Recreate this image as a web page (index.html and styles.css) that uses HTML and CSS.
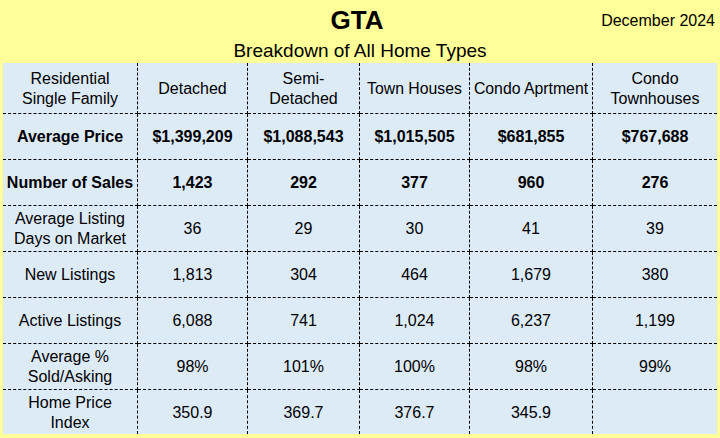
FILE: index.html
```html
<!DOCTYPE html>
<html lang="en">
<head>
<meta charset="utf-8">
<title>GTA - Breakdown of All Home Types</title>
<link rel="stylesheet" href="styles.css">
</head>
<body>
<div class="page">
  <header class="head">
    <div class="title-row">
      <div></div>
      <h1 class="title">GTA</h1>
      <div class="date">December 2024</div>
    </div>
    <h2 class="subtitle">Breakdown of All Home Types</h2>
  </header>
  <div class="grid">
    <div class="cell">Residential<br>Single Family</div>
    <div class="cell">Detached</div>
    <div class="cell">Semi-<br>Detached</div>
    <div class="cell narrow">Town Houses</div>
    <div class="cell narrow">Condo Aprtment</div>
    <div class="cell last">Condo<br>Townhouses</div>

    <div class="cell bold">Average Price</div>
    <div class="cell bold">$1,399,209</div>
    <div class="cell bold">$1,088,543</div>
    <div class="cell bold">$1,015,505</div>
    <div class="cell bold">$681,855</div>
    <div class="cell bold last">$767,688</div>

    <div class="cell bold">Number of Sales</div>
    <div class="cell bold">1,423</div>
    <div class="cell bold">292</div>
    <div class="cell bold">377</div>
    <div class="cell bold">960</div>
    <div class="cell bold last">276</div>

    <div class="cell">Average Listing<br>Days on Market</div>
    <div class="cell">36</div>
    <div class="cell">29</div>
    <div class="cell">30</div>
    <div class="cell">41</div>
    <div class="cell last">39</div>

    <div class="cell">New Listings</div>
    <div class="cell">1,813</div>
    <div class="cell">304</div>
    <div class="cell">464</div>
    <div class="cell">1,679</div>
    <div class="cell last">380</div>

    <div class="cell">Active Listings</div>
    <div class="cell">6,088</div>
    <div class="cell">741</div>
    <div class="cell">1,024</div>
    <div class="cell">6,237</div>
    <div class="cell last">1,199</div>

    <div class="cell">Average %<br>Sold/Asking</div>
    <div class="cell">98%</div>
    <div class="cell">101%</div>
    <div class="cell">100%</div>
    <div class="cell">98%</div>
    <div class="cell last">99%</div>

    <div class="cell bottom">Home Price<br>Index</div>
    <div class="cell bottom">350.9</div>
    <div class="cell bottom">369.7</div>
    <div class="cell bottom">376.7</div>
    <div class="cell bottom">345.9</div>
    <div class="cell bottom last"></div>
  </div>
</div>
</body>
</html>
```

FILE: styles.css
```css
html, body {
  margin: 0;
  padding: 0;
  background: #FFFF99;
}

body {
  font-family: "Liberation Sans", Arial, sans-serif;
  color: #000;
  width: 720px;
  height: 438px;
  overflow: hidden;
}

.page {
  padding: 0 3px;
}

.head {
  height: 63px;
  box-sizing: border-box;
  padding-top: 7px;
  display: flex;
  flex-direction: column;
}

.title-row {
  display: grid;
  grid-template-columns: 1fr auto 1fr;
  height: 26px;
}

.title {
  margin: 0;
  font-size: 26px;
  line-height: 26px;
  font-weight: bold;
  padding-right: 6px;
}

.date {
  justify-self: end;
  align-self: start;
  margin-top: 6px;
  padding-right: 2px;
  font-size: 16px;
  line-height: 16px;
}

.subtitle {
  margin: 8px 0 0;
  font-size: 19px;
  line-height: 19px;
  font-weight: normal;
  text-align: center;
}

.grid {
  display: grid;
  grid-template-columns: 135px 110px 112px 110px 123px 124px;
  grid-template-rows: 51px repeat(6, 46px) 44px;
  background: #DDEBF7;
  width: 714px;
}

.cell {
  box-sizing: border-box;
  display: flex;
  align-items: center;
  justify-content: center;
  text-align: center;
  font-size: 16px;
  line-height: 20px;
  border-right: 1px dashed #000;
  border-bottom: 1px dashed #000;
  padding-top: 1px;
}

.cell.last {
  border-right: none;
}

.cell.bottom {
  border-bottom: none;
}

.bold {
  font-weight: bold;
}

.narrow {
  font-size: 15.8px;
}
```
